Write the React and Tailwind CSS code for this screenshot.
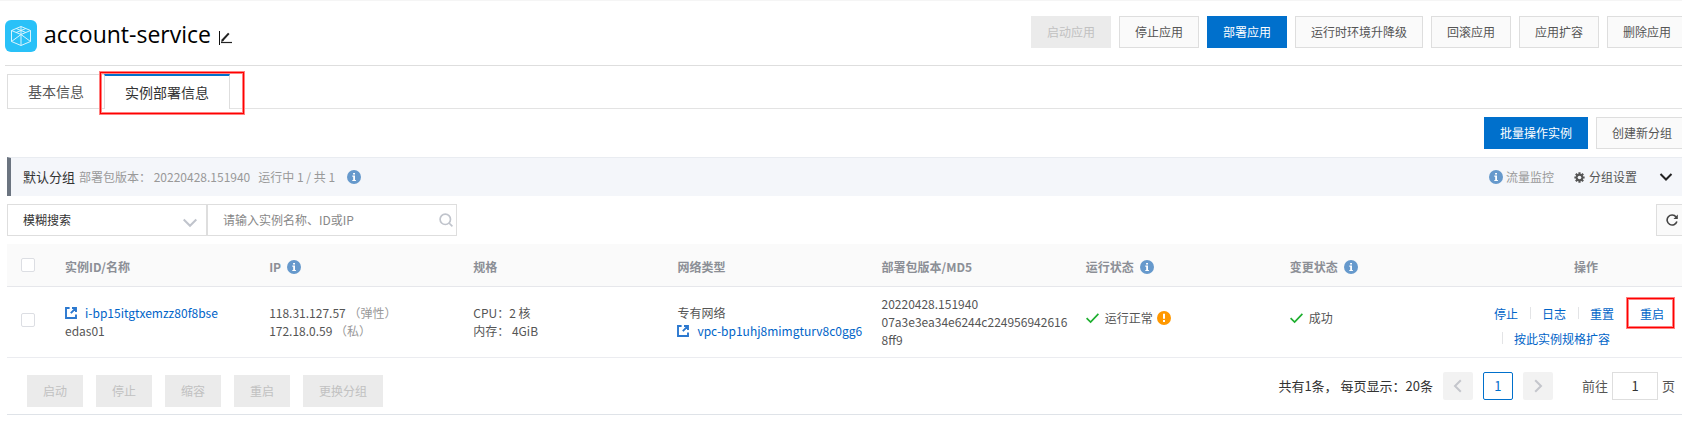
import React from "react";

const cjk = "font-['Noto_Sans_CJK_SC',sans-serif]";

function InfoIcon() {
  return (
    <svg className="h-[14px] w-[14px] shrink-0" viewBox="0 0 14 14" aria-hidden="true">
      <circle cx="7" cy="7" r="7" fill="#6699cc" />
      <path d="M5.3 5.6H8V10h.9v1.1H5.3V10h.9V6.7h-.9zM6.1 2.9H8v1.7H6.1z" fill="#fff" />
    </svg>
  );
}

function WarnIcon() {
  return (
    <svg className="h-[14px] w-[14px] shrink-0" viewBox="0 0 14 14" aria-hidden="true">
      <circle cx="7" cy="7" r="7" fill="#ff9800" />
      <path d="M6 2.8h2v5H6zM6 9.1h2v2H6z" fill="#fff" />
    </svg>
  );
}

function CheckIcon() {
  return (
    <svg className="h-[14px] w-[13px] shrink-0" viewBox="0 0 13 14" fill="none" stroke="#1eaf2f" strokeWidth="1.7" aria-hidden="true">
      <path d="M.6 7.2 4.6 11 12.4 2.9" />
    </svg>
  );
}

function ExternalIcon() {
  return (
    <svg className="h-3 w-3 shrink-0" viewBox="0 0 12 12" fill="none" stroke="#2b78cf" strokeWidth="1.9" aria-hidden="true">
      <path d="M4.6 1H1v10h10V7.6M7 1h4V5M10.8 1.2 5.8 6.2" />
    </svg>
  );
}

function Chevron({ d, className }) {
  return (
    <svg className={className} viewBox="0 0 14 14" fill="none" strokeWidth="2" stroke="currentColor" aria-hidden="true">
      <path d={d} />
    </svg>
  );
}

function Button({ kind = "normal", children }) {
  const look = {
    normal: "border-[#dedede] bg-[#fafafa] text-[#555]",
    primary: "border-[#0070cc] bg-[#0070cc] text-white",
    disabled: "border-[#ebebeb] bg-[#ebebeb] text-[#c1c1c1]",
  }[kind];
  return (
    <button type="button" disabled={kind === "disabled"} className={"h-8 shrink-0 border px-[15px] text-xs whitespace-nowrap " + look}>
      {children}
    </button>
  );
}

function Highlight({ className }) {
  return (
    <span
      className={
        "pointer-events-none absolute border border-[#ff0000] shadow-[0_0_0_1px_#ff8080,inset_0_0_0_1px_#ff8080] " + className
      }
    />
  );
}

function Check({ label }) {
  return (
    <input
      type="checkbox"
      aria-label={label}
      className="block h-[14px] w-[14px] appearance-none rounded-[2px] border border-[#dcdee3] bg-white checked:bg-[#0070cc]"
    />
  );
}

function Op({ children }) {
  return (
    <a href="#" className="text-[#0064c8]">
      {children}
    </a>
  );
}

const Sep = () => <span className="mr-[11px] ml-3 h-3 w-px bg-[#e3e4e6]" />;

function Header() {
  return (
    <header className="ml-[5px] flex items-start justify-between border-b border-[#dedede] pt-[15px] pb-[13px]">
      <div className="flex items-start pt-1">
        <svg className="h-8 w-8" viewBox="0 0 32 32" aria-hidden="true">
          <rect width="32" height="32" rx="6" fill="#29c1f8" />
          <g fill="none" stroke="#d9f4fe" strokeWidth="1" strokeLinejoin="round">
            <path d="M16 6.5 25.5 10.5V21.5L16 25.5 6.5 21.5V10.5Z" />
            <path d="M6.5 10.5 16 14.5 25.5 10.5M16 14.5V25.5M16 6.5V14.5M6.5 21.5 16 14.5 25.5 21.5M11 8.4 21 12.6M21 8.4 11 12.6" />
          </g>
        </svg>
        <h1 className="ml-[7px] font-['Open_Sans',sans-serif] text-[23px] leading-7 font-medium text-black">account-service</h1>
        <button type="button" aria-label="编辑" className="mt-[11px] ml-2">
          <svg className="block h-[14px] w-[13px]" viewBox="0 0 13 14" fill="none" stroke="#222" aria-hidden="true">
            <path d="M.5 0V14" stroke="#111" />
            <path d="M2 11.5H13" strokeWidth="1.2" />
            <path d="M3 9.8 9.8 2.4" strokeWidth="2" />
            <path d="M2 11 3 8.2 4.8 9.8Z" fill="#222" stroke="none" />
          </svg>
        </button>
      </div>
      <div className="-mr-[5px] flex gap-2">
        <Button kind="disabled">启动应用</Button>
        <Button>停止应用</Button>
        <Button kind="primary">部署应用</Button>
        <Button>运行时环境升降级</Button>
        <Button>回滚应用</Button>
        <Button>应用扩容</Button>
        <Button>删除应用</Button>
      </div>
    </header>
  );
}

function Tabs() {
  return (
    <div role="tablist" className="mt-2 ml-[7px] flex text-sm leading-[33px]">
      <button type="button" role="tab" aria-selected="false" className="border border-r-0 border-[#dedede] px-5 text-[#555]">
        基本信息
      </button>
      <button
        type="button"
        role="tab"
        aria-selected="true"
        className="relative border-x border-t-2 border-x-[#dedede] border-t-[#0070cc] px-5 text-[#333]"
      >
        实例部署信息
        <Highlight className="-top-[4px] -right-[15px] -bottom-[5px] -left-[5px]" />
      </button>
      <div className="flex-1 border-b border-[#e3e3e3]" />
    </div>
  );
}

function GroupBar() {
  return (
    <div className="ml-[7px] flex h-[39px] items-center justify-between border-t border-l-4 border-t-[#e9ecf1] border-l-[#6b7480] bg-[#f4f6fa] pr-[9px] pl-3 text-xs text-[#999]">
      <div className="flex items-center">
        <h2 className="text-[13px] text-[#333]">默认分组</h2>
        <span className="ml-1">部署包版本： 20220428.151940</span>
        <span className="mr-3 ml-2">运行中 1 / 共 1</span>
        <InfoIcon />
      </div>
      <div className="flex items-center">
        <InfoIcon />
        <span className="ml-[3px]">流量监控</span>
        <button type="button" className="ml-5 flex items-center gap-1 text-[#555]">
          <svg className="h-[11px] w-[11px]" viewBox="0 0 12 12" aria-hidden="true">
            <g stroke="#555" strokeWidth="2.4">
              <path d="M6 .4V11.6M.4 6H11.6M2 2 10 10M10 2 2 10" />
            </g>
            <circle cx="6" cy="6" r="4.1" fill="#555" />
            <circle cx="6" cy="6" r="2" fill="#f4f6fa" />
          </svg>
          分组设置
        </button>
        <button type="button" aria-label="展开" className="ml-[22px] text-[#222]">
          <Chevron className="block h-[14px] w-[14px]" d="M1.5 4 7 9.5 12.5 4" />
        </button>
      </div>
    </div>
  );
}

function SearchBar() {
  return (
    <div className="mt-2 -mr-[6px] ml-[7px] flex h-8 justify-between text-xs">
      <div className="flex">
        <label className="relative flex w-[200px]">
          <select aria-label="搜索方式" className="w-full appearance-none border border-[#dedede] bg-white pl-[15px] text-[#333]">
            <option>模糊搜索</option>
          </select>
          <Chevron className="pointer-events-none absolute top-3 right-[10px] h-[14px] w-[14px] text-[#c0c4cc]" d="M.7 3.5 7 9.8 13.3 3.5" />
        </label>
        <label className="relative flex w-[250px]">
          <input
            type="text"
            aria-label="搜索实例"
            placeholder="请输入实例名称、ID或IP"
            className="w-full border border-[#dedede] pr-8 pl-[15px] placeholder:text-[#888]"
          />
          <svg className="absolute top-[9px] right-[4px] h-[14px] w-[14px]" viewBox="0 0 14 14" fill="none" stroke="#c0c4cc" strokeWidth="1.7" aria-hidden="true">
            <circle cx="6.3" cy="6.3" r="5.2" />
            <path d="M10 10 13.4 13.4" />
          </svg>
        </label>
      </div>
      <button type="button" aria-label="刷新" className="w-8 border border-[#dedede] bg-[#fafafa] pl-[9px]">
        <svg className="h-3 w-3" viewBox="0 0 12 12" fill="none" stroke="#444" strokeWidth="1.6" aria-hidden="true">
          <path d="M10.1 3A5 5 0 1 0 10.9 7.5" />
          <path d="M11.8.6V4.9H7.5Z" fill="#444" stroke="none" />
        </svg>
      </button>
    </div>
  );
}

function Th({ children, info, className = "px-4" }) {
  return (
    <th scope="col" className={"pt-1 text-left font-bold " + className}>
      <span className="flex items-center gap-[6px]">
        {children}
        {info && <InfoIcon />}
      </span>
    </th>
  );
}

function InstanceTable() {
  return (
    <div className="mt-2 ml-[7px]">
      <table className="w-full table-fixed border-collapse text-xs leading-[18px] text-[#555]">
        <colgroup>
          <col className="w-[42px]" />
          <col span={7} />
          <col />
        </colgroup>
        <thead>
          <tr className="h-[42px] border-b border-[#e6e7eb] bg-[#fafafa] text-[#8c8f96]">
            <th scope="col" className="pl-[14px]">
              <Check label="全选" />
            </th>
            <Th>实例ID/名称</Th>
            <Th info>IP</Th>
            <Th>规格</Th>
            <Th>网络类型</Th>
            <Th>部署包版本/MD5</Th>
            <Th info>运行状态</Th>
            <Th info>变更状态</Th>
            <Th className="pl-24">操作</Th>
          </tr>
        </thead>
        <tbody>
          <tr className="h-[71px] border-b border-[#ebecf0]">
            <td className="pb-1 pl-[14px]">
              <Check label="选择 edas01" />
            </td>
            <td className="px-4">
              <a href="#" className="flex items-center gap-2 text-[#0064c8]">
                <ExternalIcon />
                i-bp15itgtxemzz80f8bse
              </a>
              edas01
            </td>
            <td className="px-4">
              <div>
                118.31.127.57 <span className="text-[#999]">（弹性）</span>
              </div>
              <div>
                172.18.0.59 <span className="text-[#999]">（私）</span>
              </div>
            </td>
            <td className="px-4">
              <div>CPU：2 核</div>
              <div>内存： 4GiB</div>
            </td>
            <td className="pl-4 whitespace-nowrap">
              <div>专有网络</div>
              <a href="#" className="flex items-center gap-2 text-[#0064c8]">
                <ExternalIcon />
                vpc-bp1uhj8mimgturv8c0gg6
              </a>
            </td>
            <td className="pl-4">
              20220428.151940
              <br />
              07a3e3ea34e6244c224956942616
              <br />
              8ff9
            </td>
            <td className="px-4 pb-2">
              <span className="flex items-center">
                <CheckIcon />
                <span className="mr-1 ml-[6px]">运行正常</span>
                <WarnIcon />
              </span>
            </td>
            <td className="px-4 pb-2">
              <span className="flex items-center gap-[6px]">
                <CheckIcon />
                成功
              </span>
            </td>
            <td className="pt-2 pl-4 leading-[25px] whitespace-nowrap">
              <div className="flex items-center">
                <Op>停止</Op>
                <Sep />
                <Op>日志</Op>
                <Sep />
                <Op>重置</Op>
                <span className="relative ml-[26px] flex">
                  <Op>重启</Op>
                  <Highlight className="-top-[3px] -right-[10px] -bottom-[2px] -left-[13px]" />
                </span>
              </div>
              <div className="flex items-center pl-2">
                <span className="mr-[11px] h-3 w-px bg-[#e3e4e6]" />
                <Op>按此实例规格扩容</Op>
              </div>
            </td>
          </tr>
        </tbody>
      </table>
      <div className="flex items-start justify-between border-b border-[#dfe3e8] pr-[7px] pb-[7px] pl-5">
        <div className="flex gap-[13px] pt-[17px]">
          <Button kind="disabled">启动</Button>
          <Button kind="disabled">停止</Button>
          <Button kind="disabled">缩容</Button>
          <Button kind="disabled">重启</Button>
          <Button kind="disabled">更换分组</Button>
        </div>
        <nav aria-label="分页" className="flex items-center pt-[14px] text-[13px] text-[#333]">
          <span className="mr-[10px]">共有1条， 每页显示：20条</span>
          <button type="button" disabled aria-label="上一页" className="flex h-7 w-[30px] items-center justify-center rounded-[2px] bg-[#f2f2f2] text-[#c4c6cc]">
            <Chevron className="h-[14px] w-[14px]" d="M9.8 1.2 4 7 9.8 12.8" />
          </button>
          <button type="button" aria-current="page" className="mx-[10px] h-7 w-[30px] rounded-[2px] border border-[#0070cc] text-[#0070cc]">
            1
          </button>
          <button type="button" disabled aria-label="下一页" className="flex h-7 w-[30px] items-center justify-center rounded-[2px] bg-[#f2f2f2] text-[#c4c6cc]">
            <Chevron className="h-[14px] w-[14px]" d="M4.2 1.2 10 7 4.2 12.8" />
          </button>
          <label className="ml-[29px] flex items-center gap-1 text-[#555]">
            前往
            <input type="text" defaultValue="1" className="h-7 w-[46px] border border-[#dedede] text-center text-[#333]" />
            页
          </label>
        </nav>
      </div>
    </div>
  );
}

export default function App() {
  return (
    <main className={"overflow-hidden border-t border-[#f5f5f5] bg-white " + cjk}>
      <Header />
      <Tabs />
      <div className="-mr-[6px] flex justify-end gap-2 py-2">
        <Button kind="primary">批量操作实例</Button>
        <Button>创建新分组</Button>
      </div>
      <GroupBar />
      <SearchBar />
      <InstanceTable />
    </main>
  );
}
